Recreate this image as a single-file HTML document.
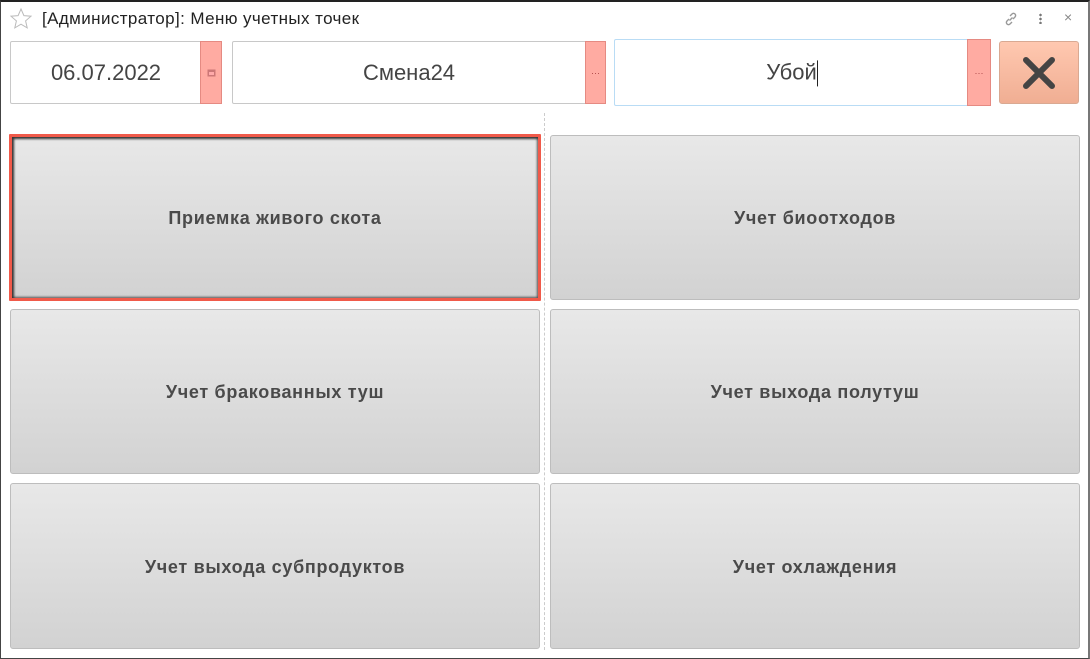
<!DOCTYPE html>
<html><head><meta charset="utf-8"><style>
*{box-sizing:border-box;margin:0;padding:0}
body{width:1090px;height:659px;background:#fff;position:relative;overflow:hidden;font-family:"Liberation Sans","DejaVu Sans",sans-serif}
.frame{position:absolute;left:0;top:0;width:1090px;height:659px;border:1px solid #444;border-top:2px solid #222;border-right:2px solid #777}
.title{position:absolute;left:42px;top:9px;font-size:17px;letter-spacing:0.4px;color:#222}
.star{position:absolute;left:9px;top:7px}
.fld{position:absolute;border:1px solid #c8c8c8;border-radius:2px;background:#fff;font-size:22px;color:#444;text-align:center}
.fld span{position:absolute;top:50%;transform:translateY(-50%);left:0}
.red{position:absolute;top:-1px;bottom:-1px;background:#ffaba2;border:1px solid #e58a82;color:#a44;font-size:9px;display:flex;align-items:center;justify-content:center}
.btn{position:absolute;border:1px solid #bdbdbd;border-radius:3px;background:linear-gradient(#e8e8e8,#d2d2d2);display:flex;align-items:center;justify-content:center;font-weight:bold;font-size:18px;letter-spacing:0.7px;color:#4a4a4a;padding-top:2px}
.sel{border:3px solid #f05a4a;box-shadow:inset 2px 2px 2px #333,inset -1px -1px 2px #555;border-radius:1px}
.div{position:absolute;left:544px;top:113px;height:537px;border-left:1px dashed #ccc}
</style></head><body>
<div class="frame"></div>
<svg class="star" width="24" height="24" viewBox="0 0 24 24"><path d="M12 2l2.9 6.6 7.1.6-5.4 4.7 1.6 7-6.2-3.7-6.2 3.7 1.6-7L2 9.2l7.1-.6z" fill="none" stroke="#bbb" stroke-width="1"/></svg>
<div class="title">[Администратор]: Меню учетных точек</div>
<svg style="position:absolute;left:1003px;top:11px" width="16" height="16" viewBox="0 0 16 16"><g fill="none" stroke="#999" stroke-width="1.4"><path d="M6.5 9.5l3-3"/><path d="M7 5l2-2a2.1 2.1 0 013 3l-2 2"/><path d="M9 11l-2 2a2.1 2.1 0 01-3-3l2-2"/></g></svg>
<div style="position:absolute;left:1039px;top:13px;width:3px;height:11px;background:radial-gradient(circle,#777 1.2px,transparent 1.4px) 0 0/3px 4px"></div>
<div style="position:absolute;left:1064px;top:9px;font-size:14px;color:#888">×</div>

<div class="fld" style="left:10px;top:41px;width:212px;height:63px"><span style="width:190px">06.07.2022</span>
<div class="red" style="left:189px;width:22px"><svg width="9" height="9" viewBox="0 0 9 9"><rect x="0.5" y="1.5" width="8" height="7" fill="#c77" /><rect x="2" y="4" width="5" height="3" fill="#faa"/></svg></div></div>
<div class="fld" style="left:232px;top:41px;width:374px;height:63px"><span style="width:352px">Смена24</span>
<div class="red" style="left:352px;width:21px">···</div></div>
<div class="fld" style="left:614px;top:39px;width:377px;height:67px;border-color:#b9dcf5"><span style="width:354px">Убой<span style="position:static;display:inline-block;width:1px;height:26px;background:#222;vertical-align:middle;transform:none"></span></span>
<div class="red" style="left:352px;width:24px">···</div></div>
<div style="position:absolute;left:999px;top:41px;width:80px;height:63px;border:1px solid #d9a992;border-radius:3px;background:linear-gradient(#ffc8b0,#f0ae93);display:flex;align-items:center;justify-content:center">
<svg width="34" height="34" viewBox="0 0 34 34"><path d="M4 4L30 30M30 4L4 30" stroke="#444" stroke-width="6" stroke-linecap="round"/></svg></div>

<div class="div"></div>
<div class="btn sel" style="left:9px;top:134px;width:532px;height:167px">Приемка живого скота</div>
<div class="btn" style="left:550px;top:135px;width:530px;height:165px">Учет биоотходов</div>
<div class="btn" style="left:10px;top:309px;width:530px;height:165px">Учет бракованных туш</div>
<div class="btn" style="left:550px;top:309px;width:530px;height:165px">Учет выхода полутуш</div>
<div class="btn" style="left:10px;top:483px;width:530px;height:166px">Учет выхода субпродуктов</div>
<div class="btn" style="left:550px;top:483px;width:530px;height:166px">Учет охлаждения</div>
</body></html>
